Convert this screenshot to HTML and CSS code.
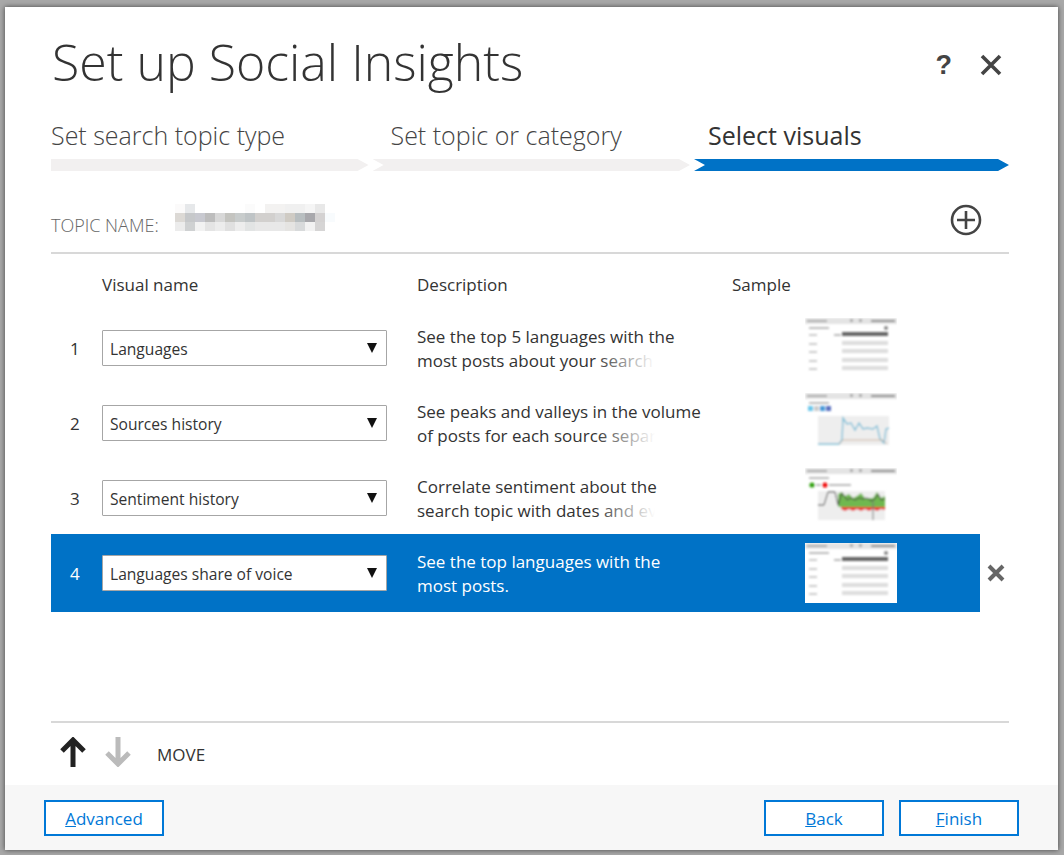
FILE: index.html
```html
<!doctype html>
<html>
<head>
    <meta charset="utf-8">
    <title>Set up Social Insights</title>
    <link rel="stylesheet" href="styles.css">
</head>
<body>
<div class="dialog">
    <div class="content">
        <div class="title-bar">
            <h1>Set up Social Insights</h1>
            <div class="title-icons">
                <span class="help">?</span>
                <svg class="icon-close" width="24" height="24" viewBox="0 0 24 24">
                    <path d="M3 3 L21 21 M21 3 L3 21" stroke="#444" stroke-width="3.6" fill="none"/>
                </svg>
            </div>
        </div>

        <div class="steps">
            <div class="step">
                <div class="step-name">Set search topic type</div>
                <div class="step-bar first"></div>
            </div>
            <div class="step">
                <div class="step-name">Set topic or category</div>
                <div class="step-bar"></div>
            </div>
            <div class="step active">
                <div class="step-name">Select visuals</div>
                <div class="step-bar"></div>
            </div>
        </div>

        <div class="topic">
            <span class="topic-label">TOPIC NAME:</span>
            <!-- Name ist im Original verpixelt -->
            <svg class="topic-blur" width="160" height="27" viewBox="0 0 16 3" shape-rendering="crispEdges" preserveAspectRatio="none">
                <rect x="0" y="0" width="1" height="1" fill="#fbfafa"/><rect x="1" y="0" width="1" height="1" fill="#e6e8ea"/>
                <rect x="7" y="0" width="1" height="1" fill="#fbfbfb"/><rect x="9" y="0" width="2" height="1" fill="#f3f2f1"/>
                <rect x="11" y="0" width="2" height="1" fill="#f0f0f0"/><rect x="13" y="0" width="1" height="1" fill="#f5f5f5"/>
                <rect x="14" y="0" width="1" height="1" fill="#e8e8e8"/>
                <rect x="0" y="1" width="1" height="1" fill="#dcd9d5"/><rect x="1" y="1" width="1" height="1" fill="#c6c8ca"/>
                <rect x="2" y="1" width="1" height="1" fill="#c8c9d0"/><rect x="3" y="1" width="1" height="1" fill="#bdbdbd"/>
                <rect x="4" y="1" width="1" height="1" fill="#d8d8d8"/><rect x="5" y="1" width="1" height="1" fill="#c4c4c0"/>
                <rect x="6" y="1" width="1" height="1" fill="#c8cccc"/><rect x="7" y="1" width="1" height="1" fill="#bfc4c6"/>
                <rect x="8" y="1" width="2" height="1" fill="#d2d0ce"/><rect x="10" y="1" width="1" height="1" fill="#d8d8d8"/>
                <rect x="11" y="1" width="1" height="1" fill="#cfcbc4"/><rect x="12" y="1" width="1" height="1" fill="#b8bec0"/>
                <rect x="13" y="1" width="1" height="1" fill="#a8a8ac"/><rect x="14" y="1" width="1" height="1" fill="#d4d2d2"/>
                <rect x="15" y="1" width="1" height="1" fill="#f8fbfd"/>
                <rect x="0" y="2" width="1" height="1" fill="#ececec"/><rect x="1" y="2" width="1" height="1" fill="#cfd1d2"/>
                <rect x="2" y="2" width="1" height="1" fill="#f2f2f2"/><rect x="3" y="2" width="1" height="1" fill="#e4e4e4"/>
                <rect x="4" y="2" width="1" height="1" fill="#ececec"/><rect x="5" y="2" width="1" height="1" fill="#e0e0e0"/>
                <rect x="6" y="2" width="1" height="1" fill="#ededed"/><rect x="7" y="2" width="1" height="1" fill="#e2e4e4"/>
                <rect x="8" y="2" width="3" height="1" fill="#e8e8e8"/><rect x="11" y="2" width="1" height="1" fill="#e5e4e2"/>
                <rect x="12" y="2" width="1" height="1" fill="#d8dadb"/><rect x="13" y="2" width="1" height="1" fill="#f2f2f2"/>
                <rect x="14" y="2" width="1" height="1" fill="#d6d5d5"/>
            </svg>
            <svg class="icon-add" width="32" height="32" viewBox="0 0 32 32">
                <circle cx="16" cy="16" r="14" stroke="#444" stroke-width="2.6" fill="none"/>
                <path d="M16 7 V25 M7 16 H25" stroke="#444" stroke-width="2.6"/>
            </svg>
        </div>

        <div class="table-head">
            <div class="col-name">Visual name</div>
            <div class="col-desc">Description</div>
            <div class="col-sample">Sample</div>
        </div>

        <div class="rows">
            <div class="row">
                <div class="num">1</div>
                <div class="select-box"><span>Languages</span><i class="caret"></i></div>
                <div class="desc">See the top 5 languages with the most posts about your search topic.</div>
                <svg class="thumb" width="92" height="60" viewBox="0 0 92 60">
                    <use href="#thumb-bars"/>
                </svg>
            </div>
            <div class="row">
                <div class="num">2</div>
                <div class="select-box"><span>Sources history</span><i class="caret"></i></div>
                <div class="desc">See peaks and valleys in the volume of posts for each source separately.</div>
                <svg class="thumb" width="92" height="60" viewBox="0 0 92 60">
                    <use href="#thumb-head"/>
                    <g filter="url(#soft)">
                        <rect x="3" y="13" width="5" height="5" fill="#6cc8ec"/>
                        <rect x="9" y="13" width="5" height="5" fill="#ccc"/>
                        <rect x="15" y="13" width="5" height="5" fill="#4a9ad8"/>
                        <rect x="21" y="13" width="5" height="5" fill="#5a70c0"/>
                        <rect x="13" y="23" width="71" height="29" fill="#eeeeee"/>
                        <path d="M13 51 H34 L37 47 L38 25 L42 31 L46 30 L50 37 L54 30 L58 36 L62 35 L68 36 L72 33 L75 46 L79 50 L81 36 L84 35" stroke="#80c0d8" stroke-width="1.4" fill="none"/>
                        <path d="M34 51 L38 47 H78 L82 51" stroke="#c8a890" stroke-width=".8" fill="none"/>
                    </g>
                </svg>
            </div>
            <div class="row">
                <div class="num">3</div>
                <div class="select-box"><span>Sentiment history</span><i class="caret"></i></div>
                <div class="desc">Correlate sentiment about the search topic with dates and events.</div>
                <svg class="thumb" width="92" height="60" viewBox="0 0 92 60">
                    <use href="#thumb-head"/>
                    <g filter="url(#soft)">
                        <circle cx="7" cy="17" r="2.6" fill="#30a010"/>
                        <circle cx="20" cy="17" r="2.6" fill="#f00808"/>
                        <rect x="11" y="16" width="5" height="2" fill="#bbb"/>
                        <rect x="24" y="16" width="22" height="2" fill="#bbb"/>
                        <rect x="13" y="23" width="67" height="29" fill="#eeeeee"/>
                        <path d="M33 26 L37 24 L40 28 L44 26 L48 30 L52 28 L56 25 L60 30 L64 30 L68 30 L72 24 L76 30 L80 28 V39 H33 Z" fill="#70b850"/>
                        <path d="M36 39 H80 V42 L76 41 L72 43 L68 41 L64 43 L60 41 L56 43 L52 41 L48 43 L44 41 L40 43 L36 41 Z" fill="#e83838"/>
                        <path d="M13 37 H19 L23 24 H30 L33 37 L37 25 L42 32 L46 30 L50 32 L54 30 L58 31 L62 30 L66 33 L70 31 L73 26 L76 32 L80 31" stroke="#444" stroke-width="1" fill="none"/>
                        <path d="M68 33 V52" stroke="#777" stroke-width="1"/>
                    </g>
                </svg>
            </div>
            <div class="row selected">
                <div class="num">4</div>
                <div class="select-box"><span>Languages share of voice</span><i class="caret"></i></div>
                <div class="desc">See the top languages with the<br>most posts.</div>
                <svg class="thumb" width="92" height="60" viewBox="0 0 92 60">
                    <use href="#thumb-bars"/>
                </svg>
                <svg class="icon-remove" width="20" height="20" viewBox="0 0 20 20">
                    <path d="M3 3 L17 17 M17 3 L3 17" stroke="#666" stroke-width="4" fill="none"/>
                </svg>
            </div>
        </div>

        <div class="move-bar">
            <svg width="26" height="30" viewBox="0 0 26 30">
                <path d="M13 30 V3 M2 14 L13 3 L24 14" stroke="#222" stroke-width="5" fill="none"/>
            </svg>
            <svg width="26" height="30" viewBox="0 0 26 30">
                <path d="M13 0 V27 M2 16 L13 27 L24 16" stroke="#bbb" stroke-width="5" fill="none"/>
            </svg>
            <span class="move-label">MOVE</span>
        </div>
    </div>

    <div class="footer">
        <button class="btn"><u>A</u>dvanced</button>
        <div class="footer-right">
            <button class="btn"><u>B</u>ack</button>
            <button class="btn"><u>F</u>inish</button>
        </div>
    </div>
</div>

<svg class="defs" width="0" height="0">
    <defs>
        <filter id="soft"><feGaussianBlur stdDeviation="0.8"/></filter>
        <g id="thumb-head" filter="url(#soft)">
            <rect x="0" y="0" width="92" height="6" fill="#e4e4e4"/>
            <rect x="2" y="2" width="20" height="2" fill="#aaa"/>
            <rect x="45" y="1" width="3" height="3" fill="#aaa"/>
            <rect x="54" y="1" width="3" height="3" fill="#aaa"/>
            <rect x="66" y="2" width="24" height="2" fill="#888"/>
            <rect x="4" y="9" width="20" height="2" fill="#bbb"/>
        </g>
        <g id="thumb-bars">
            <rect x="0" y="0" width="92" height="60" fill="#fff"/>
            <use href="#thumb-head"/>
            <g filter="url(#soft)">
                <circle cx="81" cy="10" r="2" fill="#888"/>
                <rect x="4" y="16" width="8" height="2" fill="#ccc"/>
                <rect x="29" y="16" width="7" height="2" fill="#bbb"/>
                <rect x="37" y="14" width="46" height="4" fill="#666"/>
                <rect x="4" y="25" width="8" height="2" fill="#ccc"/>
                <rect x="37" y="23" width="46" height="4" fill="#ddd"/>
                <rect x="4" y="33" width="8" height="2" fill="#ccc"/>
                <rect x="37" y="31" width="46" height="4" fill="#ddd"/>
                <rect x="4" y="42" width="8" height="2" fill="#ccc"/>
                <rect x="37" y="40" width="46" height="4" fill="#ddd"/>
                <rect x="4" y="50" width="8" height="2" fill="#ccc"/>
                <rect x="37" y="48" width="46" height="4" fill="#ddd"/>
            </g>
        </g>
    </defs>
</svg>
</body>
</html>
```

FILE: styles.css
```css
html, body {
    margin: 0;
    height: 100%;
}

body {
    font-family: "Open Sans", sans-serif;
    color: #333;
    background-color: #a8a8a8;
    overflow: hidden;
    padding: 7px 0 0 5px;
    box-sizing: border-box;
}

.dialog {
    width: 1053px;
    height: 843px;
    background-color: #fff;
    box-shadow: 0 0 5px rgba(0, 0, 0, 0.6);
    display: flex;
    flex-direction: column;
}

.content {
    flex: 1;
    padding: 0 49px 0 46px;
}

/* Titel */
.title-bar {
    display: flex;
    justify-content: space-between;
    height: 104px;
}

h1 {
    margin: 21px 0 0 1px;
    font-size: 50px;
    line-height: 68px;
    font-weight: 300;
    color: #333;
}

.title-icons {
    display: flex;
    align-items: center;
    gap: 27px;
    height: 24px;
    margin: 46px 6px 0 0;
}

.help {
    font-family: "Liberation Sans", sans-serif;
    font-size: 27px;
    font-weight: bold;
    color: #444;
}

/* Schritte */
.steps {
    display: flex;
    gap: 4px;
}

.step {
    flex: 0 0 317.5px;
}

.step.active {
    flex: 1;
}

.step-name {
    font-size: 25px;
    line-height: 32px;
    font-weight: 300;
    color: #444;
    padding-top: 8px;
    height: 40px;
}

.step + .step .step-name {
    padding-left: 18px;
}

.step.active .step-name {
    font-weight: 400;
    color: #333;
    padding-left: 14px;
}

.step-bar {
    height: 12px;
    background-color: #f2f0f0;
    clip-path: polygon(0 0, calc(100% - 11px) 0, 100% 50%, calc(100% - 11px) 100%, 0 100%, 11px 50%);
}

.step-bar.first {
    clip-path: polygon(0 0, calc(100% - 11px) 0, 100% 50%, calc(100% - 11px) 100%, 0 100%);
}

.step.active .step-bar {
    background-color: #0072c6;
}

/* Themenname */
.topic {
    display: flex;
    align-items: flex-end;
    height: 81px;
    border-bottom: 2px solid #d8d8d8;
}

.topic-label {
    font-size: 18px;
    font-weight: 300;
    color: #666;
    line-height: 20px;
    margin-bottom: 17px;
}

.topic-blur {
    margin: 0 0 21px 16px;
}

.icon-add {
    margin: 0 27px 16px auto;
}

/* Tabelle */
.table-head {
    display: flex;
    height: 61px;
    align-items: center;
    font-size: 17px;
    padding-left: 51px;
    margin-bottom: -6px;
}

.col-name {
    width: 315px;
}

.col-desc {
    width: 315px;
}

.rows {
    height: 412px;
}

.row {
    display: flex;
    height: 75px;
    align-items: flex-start;
    font-size: 17px;
    position: relative;
    box-sizing: border-box;
    width: 929px;
}

.row.selected {
    height: 78px;
    background-color: #0072c6;
    color: #fff;
}

.num {
    width: 51px;
    padding: 28px 0 0 19px;
    box-sizing: border-box;
    line-height: 24px;
}

.select-box {
    width: 285px;
    height: 36px;
    margin-top: 21px;
    border: 1px solid #a6a6a6;
    border-radius: 1px;
    box-sizing: border-box;
    background-color: #fff;
    color: #333;
    display: flex;
    align-items: center;
    justify-content: space-between;
    padding: 1px 7px 0;
    font-size: 15.6px;
}

.caret {
    border-left: 5px solid transparent;
    border-right: 5px solid transparent;
    border-top: 10px solid #111;
    margin: -2px 2px 0 0;
}

.desc {
    width: 290px;
    margin: 16px 0 0 30px;
    height: 48px;
    line-height: 24px;
    overflow: hidden;
    position: relative;
}

/* zweite Zeile blendet nach rechts aus */
.desc::after {
    content: "";
    position: absolute;
    left: 178px;
    right: 0;
    top: 24px;
    height: 24px;
    background: linear-gradient(to right, rgba(255, 255, 255, 0), #fff 60px);
}

.selected .desc::after {
    display: none;
}

.thumb {
    margin: 9px 0 0 98px;
    flex: none;
}

.icon-remove {
    position: absolute;
    right: -26px;
    top: 29px;
}

/* Verschieben */
.move-bar {
    display: flex;
    align-items: flex-start;
    gap: 19px;
    height: 62px;
    border-top: 2px solid #d8d8d8;
    padding: 14px 0 0 9px;
    box-sizing: border-box;
}

.move-label {
    font-size: 17px;
    line-height: 24px;
    margin: 6px 0 0 7px;
    color: #333;
}

/* Fussleiste */
.footer {
    height: 65px;
    background-color: #f7f7f7;
    display: flex;
    justify-content: space-between;
    padding: 15px 39px 0 39px;
    box-sizing: border-box;
}

.footer-right {
    display: flex;
    gap: 15px;
}

.btn {
    width: 120px;
    height: 36px;
    border: 2px solid #0078d7;
    background-color: #fff;
    color: #0078d7;
    font-family: "Open Sans", sans-serif;
    font-size: 17px;
    padding: 0;
}

.defs {
    position: absolute;
}
```
